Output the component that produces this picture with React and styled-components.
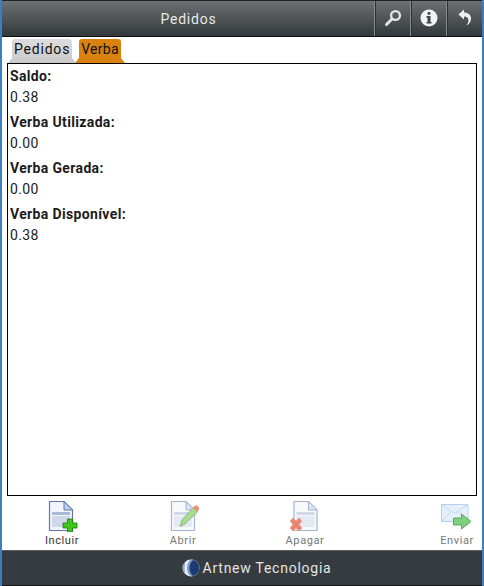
import React from 'react'
import styled, { createGlobalStyle } from 'styled-components'

const Global = createGlobalStyle`
  html, body { margin: 0; padding: 0; background: #fff; }
  body { font-family: Roboto, "Liberation Sans", sans-serif; }
`

const Frame = styled.div`
  width: 484px;
  height: 586px;
  box-sizing: border-box;
  display: flex;
  flex-direction: column;
  background: #fff;
  border-left: 2px solid #3a7fc0;
  border-right: 2px solid #3a7fc0;
  overflow: hidden;
`

const Header = styled.div`
  height: 37px;
  flex: none;
  box-sizing: border-box;
  display: flex;
  align-items: stretch;
  background: linear-gradient(#6c7072, #33383b);
  border-top: 1px solid #222;
  border-bottom: 1px solid #0c0e10;
`

const Title = styled.div`
  flex: 1;
  display: flex;
  align-items: center;
  justify-content: center;
  padding-left: 1px;
  color: #e8e8e8;
  font-size: 14px;
  letter-spacing: 0.8px;
`

const HeaderButton = styled.div`
  width: 36px;
  flex: none;
  box-sizing: border-box;
  display: flex;
  align-items: center;
  justify-content: center;
  padding-bottom: 2px;
  border-left: 1px solid #8a8e90;
  box-shadow: inset 1px 0 0 #2c3033;
`

const Tabs = styled.div`
  height: 26px;
  flex: none;
  display: flex;
  align-items: flex-end;
  gap: 7px;
  padding-left: 10px;
`

const Tab = styled.div`
  position: relative;
  height: 24px;
  box-sizing: border-box;
  padding: 2px 2px 0;
  border-radius: 3px 3px 0 0;
  font-size: 14px;
  letter-spacing: ${p => p.$active ? '0.3px' : '0.8px'};
  color: #111;
  background: ${p => p.$active ? '#d9820f' : 'linear-gradient(#dddddd, #c9c9c9)'};
  &::before, &::after {
    content: '';
    position: absolute;
    bottom: 0;
    width: 0;
    height: 0;
    border-bottom: 5px solid ${p => p.$active ? '#d9820f' : '#c9c9c9'};
  }
  &::before { left: -4px; border-left: 4px solid transparent; }
  &::after { right: -4px; border-right: 4px solid transparent; }
`

const Content = styled.div`
  flex: none;
  height: 433px;
  box-sizing: border-box;
  margin: 0 5px;
  padding: 2px 2px;
  border: 1px solid #000;
`

const Label = styled.div`
  height: 21px;
  line-height: 21px;
  font-size: 14px;
  font-weight: 700;
  letter-spacing: 0.35px;
  color: #1c1c1c;
`

const Value = styled.div`
  height: 25px;
  line-height: 21px;
  font-size: 14px;
  letter-spacing: 0.35px;
  color: #1c1c1c;
`

const Toolbar = styled.div`
  flex: 1;
  display: grid;
  grid-template-columns: 120px 122px 122px 1fr;
`

const Action = styled.div`
  display: flex;
  flex-direction: column;
  align-items: center;
  justify-self: ${p => p.$end ? 'end' : 'stretch'};
  width: ${p => p.$end ? '50px' : 'auto'};
  color: ${p => p.$enabled ? '#333' : '#777'};
  font-size: 11px;
  letter-spacing: 0.6px;
  padding-top: 4px;
`

const ActionIcon = styled.svg`
  width: 32px;
  height: 32px;
  display: block;
`

const ActionLabel = styled.span`
  margin-top: 2px;
  line-height: 13px;
`

const Footer = styled.div`
  height: 36px;
  flex: none;
  box-sizing: border-box;
  display: flex;
  align-items: center;
  justify-content: center;
  gap: 3px;
  padding-left: 29px;
  background: #353b3e;
  border-top: 1px solid #5a5f62;
  border-bottom: 1px solid #111;
  color: #e4e4e4;
  font-size: 14px;
  letter-spacing: 0.75px;
`

const Doc = ({ faded, x = 0 }) => (
  <g opacity={faded ? 0.55 : 1} transform={`translate(${x} 0)`}>
    <path d="M3.5 1.5H18L26.5 10V30.5H3.5Z" fill="#f2f5fb" stroke="#5f78a8" strokeWidth="1.2" />
    <path d="M18 1.5V10H26.5Z" fill="#b9d3ee" stroke="#5f78a8" strokeWidth="1" />
    <rect x="6" y="12" width="18" height="3" fill="#aab9d8" />
    <rect x="6" y="16" width="18" height="11" fill="#cfd8ea" />
  </g>
)

const Incluir = () => (
  <ActionIcon viewBox="0 0 32 32">
    <Doc />
    <path d="M21.5 19h5v4h4.500v5h-4.500v4h-5v-4h-4.500v-5h4.500z" fill="#3fc51c" stroke="#1d7a0c" strokeWidth="0.8" />
  </ActionIcon>
)

const Abrir = () => (
  <ActionIcon viewBox="0 0 32 32">
    <Doc faded x={1} />
    <path d="M13 26.500l2-6.500L26 7.500l4.500 4.500L18 24z" fill="#a6dc8c" stroke="#8aa98a" strokeWidth="0.8" />
    <path d="M26 7.500l1.500-1.500c1-1 2-1 3 0l1 1c.8 1 .8 2 0 3l-1 2z" fill="#ec8e78" />
  </ActionIcon>
)

const Apagar = () => (
  <ActionIcon viewBox="0 0 32 32">
    <Doc faded x={1.500} />
    <path d="M1 21l3-3 3 3 3-3 3 3-3 3.500 3 3.500-3 3-3-3-3 3-3-3 3-3.500z" fill="#ee8270" stroke="#d8a090" strokeWidth="0.6" />
  </ActionIcon>
)

const Enviar = () => (
  <ActionIcon viewBox="0 0 32 32">
    <path d="M.500 4.500h26.500v17H.500z" fill="#e6f0fb" stroke="#b5d0ee" strokeWidth="1" />
    <path d="M.500 4.500l13 9 13.500-9M.500 21.500l10-10M27 21.500L17 11.500" fill="none" stroke="#bcd6f0" strokeWidth="1" />
    <path d="M12.500 18h8v-4l9.500 7.500-9.500 7.500v-4h-8z" fill="#7fd07c" stroke="#5fa860" strokeWidth="1" />
  </ActionIcon>
)

const Logo = () => (
  <svg width="18" height="18" viewBox="0 0 18 18">
    <circle cx="9" cy="9" r="8.500" fill="#e6edf5" />
    <path d="M9 .5a8.500 8.500 0 0 1 0 17c-3-2-4-5-4-8.500S6.500 2 9 .5z" fill="#7f9cc4" />
    <path d="M11 1a8.200 8.200 0 0 1 0 16c-2.500-2-3.500-5-3.500-8s1-6 3.500-8z" fill="#1d3a72" />
    <path d="M3.500 2.800a8 8 0 0 0 0 12.400c-1.200-4-1.200-8.400 0-12.400z" fill="#8aa6cc" />
  </svg>
)

const SearchIcon = () => (
  <svg width="18" height="18" viewBox="0 0 18 18">
    <circle cx="11.500" cy="6.500" r="4.400" fill="none" stroke="#e3e3e3" strokeWidth="2.400" />
    <path d="M8 10l-5.500 5.500" stroke="#e3e3e3" strokeWidth="3" strokeLinecap="round" />
  </svg>
)

const InfoIcon = () => (
  <svg width="18" height="18" viewBox="0 0 18 18">
    <circle cx="9" cy="9" r="8.500" fill="#f1f1f1" />
    <rect x="7.500" y="3" width="3" height="2.800" rx="1" fill="#3f4447" />
    <path d="M6.500 7h4v6h1v1.500H6.500V13h1V8.500h-1z" fill="#3f4447" />
  </svg>
)

const BackIcon = () => (
  <svg width="14" height="17" viewBox="0 0 14 17">
    <path d="M.5 5.500L6 .5v3c4 0 7 2.200 7 6.200 0 3-1.700 5.600-5 6.800 1.700-1.500 2.500-3.300 2.500-5.200 0-2.400-1.700-3.800-4.500-3.800v3z" fill="#f0f0f0" />
  </svg>
)

const fields = [
  { label: 'Saldo:', value: '0.38' },
  { label: 'Verba Utilizada:', value: '0.00' },
  { label: 'Verba Gerada:', value: '0.00' },
  { label: 'Verba Disponível:', value: '0.38' },
]

const actions = [
  { label: 'Incluir', icon: <Incluir />, enabled: true },
  { label: 'Abrir', icon: <Abrir /> },
  { label: 'Apagar', icon: <Apagar /> },
  { label: 'Enviar', icon: <Enviar />, end: true },
]

const App = () => (
  <Frame>
    <Global />
    <Header>
      <Title>Pedidos</Title>
      <HeaderButton><SearchIcon /></HeaderButton>
      <HeaderButton><InfoIcon /></HeaderButton>
      <HeaderButton><BackIcon /></HeaderButton>
    </Header>
    <Tabs>
      <Tab>Pedidos</Tab>
      <Tab $active>Verba</Tab>
    </Tabs>
    <Content>
      {fields.map(f => (
        <React.Fragment key={f.label}>
          <Label>{f.label}</Label>
          <Value>{f.value}</Value>
        </React.Fragment>
      ))}
    </Content>
    <Toolbar>
      {actions.map(a => (
        <Action key={a.label} $enabled={a.enabled} $end={a.end}>
          {a.icon}
          <ActionLabel>{a.label}</ActionLabel>
        </Action>
      ))}
    </Toolbar>
    <Footer><Logo />Artnew Tecnologia</Footer>
  </Frame>
)

export default App
